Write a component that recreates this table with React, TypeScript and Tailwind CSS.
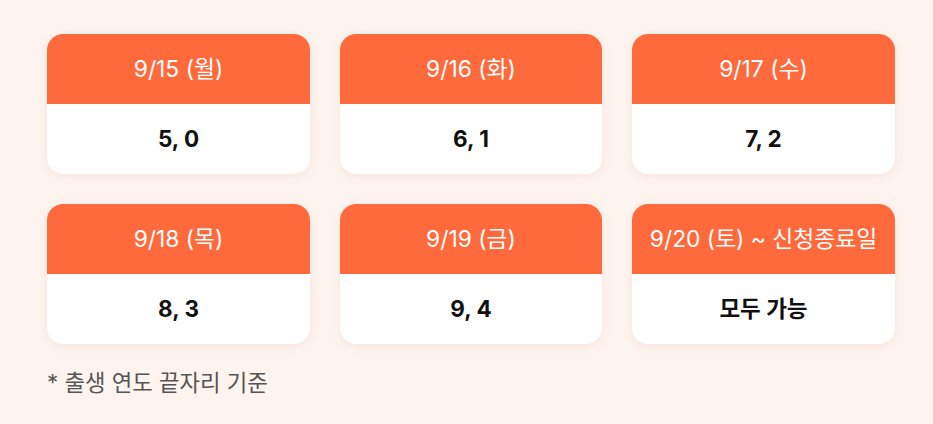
import React from 'react';

const days = [
  { date: '9/15 (월)', nums: '5, 0' },
  { date: '9/16 (화)', nums: '6, 1' },
  { date: '9/17 (수)', nums: '7, 2' },
  { date: '9/18 (목)', nums: '8, 3' },
  { date: '9/19 (금)', nums: '9, 4' },
  { date: '9/20 (토) ~ 신청종료일', nums: '모두 가능' },
];

export default function App() {
  return (
    <div
      className="w-[933px] h-[424px] bg-[#fdf4ef] pl-[47px] pt-[34px]"
      style={{ fontFamily: 'Inter, "Noto Sans CJK KR", sans-serif' }}
    >
      <div className="grid grid-cols-[263px_262px_263px] gap-x-[30px] gap-y-[30px] w-[848px]">
        {days.map((d) => (
          <div
            key={d.date}
            className="h-[140px] rounded-[16px] overflow-hidden bg-white shadow-[0_2px_10px_rgba(200,120,90,0.12)]"
          >
            <div className="h-[70px] bg-[#ff6a3d] flex items-center justify-center text-white text-[22.8px]">
              {d.date}
            </div>
            <div className="h-[70px] flex items-center justify-center text-[22.5px] font-bold text-[#111]">
              {d.nums}
            </div>
          </div>
        ))}
      </div>
      <p className="mt-[24px] text-[22.3px] leading-[30px] text-[#555]">* 출생 연도 끝자리 기준</p>
    </div>
  );
}
